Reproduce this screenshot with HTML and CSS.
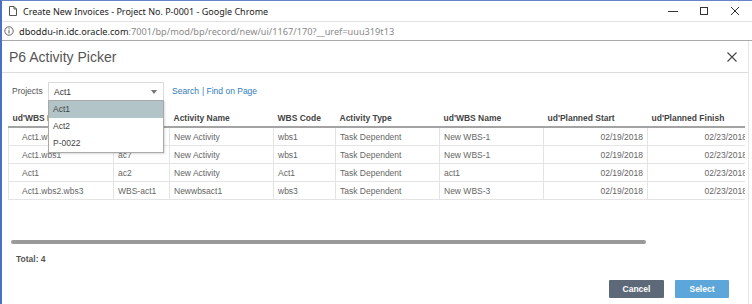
FILE: index.html
```html
<!DOCTYPE html>
<html lang="en">
<head>
    <meta charset="UTF-8">
    <title>Create New Invoices - Project No. P-0001</title>
    <link rel="stylesheet" href="styles.css">
</head>
<body>
    <div class="window">
        <div class="titlebar">
            <svg class="page-icon" width="8" height="10" viewBox="0 0 8 10">
                <path d="M0.5 0.5 H5 L7.5 3 V9.5 H0.5 Z M5 0.5 V3 H7.5" fill="none" stroke="#555" stroke-width="1"/>
            </svg>
            <span class="window-title">Create New Invoices - Project No. P-0001 - Google Chrome</span>
            <div class="window-controls">
                <svg width="10" height="10" viewBox="0 0 10 10"><path d="M0 5.5 H10" stroke="#333" stroke-width="1"/></svg>
                <svg width="10" height="10" viewBox="0 0 10 10"><rect x="1.5" y="1.5" width="7" height="7" fill="none" stroke="#333" stroke-width="1"/></svg>
                <svg width="10" height="10" viewBox="0 0 10 10"><path d="M1 1 L9 9 M9 1 L1 9" stroke="#333" stroke-width="1"/></svg>
            </div>
        </div>
        <div class="addressbar">
            <svg class="info-icon" width="10" height="10" viewBox="0 0 10 10">
                <circle cx="5" cy="5" r="4.2" fill="none" stroke="#555" stroke-width="0.9"/>
                <path d="M5 4.2 V7.4" stroke="#555" stroke-width="1"/>
                <circle cx="5" cy="2.8" r="0.6" fill="#555"/>
            </svg>
            <span class="url"><span class="url-host">dboddu-in.idc.oracle.com</span>:7001/bp/mod/bp/record/new/ui/1167/170?__uref=uuu319t13</span>
        </div>

        <div class="dialog">
            <div class="dialog-head">
                <h1 class="dialog-title">P6 Activity Picker</h1>
                <svg class="dialog-close" width="10" height="10" viewBox="0 0 10 10"><path d="M0.5 0.5 L9.5 9.5 M9.5 0.5 L0.5 9.5" stroke="#444" stroke-width="1.1"/></svg>
            </div>

            <div class="toolbar">
                <span class="label">Projects</span>
                <div class="picker">
                    <div class="select">
                        <span>Act1</span>
                        <span class="arrow"></span>
                    </div>
                    <ul class="options">
                        <li class="active">Act1</li>
                        <li>Act2</li>
                        <li>P-0022</li>
                    </ul>
                </div>
                <a class="link">Search</a>
                <a class="link sep">| Find on Page</a>
            </div>

            <div class="grid-wrap">
                <table class="grid">
                    <colgroup>
                        <col style="width:105px">
                        <col style="width:56px">
                        <col style="width:104px">
                        <col style="width:62px">
                        <col style="width:104px">
                        <col style="width:104px">
                        <col style="width:104px">
                        <col style="width:104px">
                    </colgroup>
                    <thead>
                        <tr>
                            <th>ud'WBS Name</th>
                            <th>Activity ID</th>
                            <th>Activity Name</th>
                            <th>WBS Code</th>
                            <th>Activity Type</th>
                            <th>ud'WBS Name</th>
                            <th>ud'Planned Start</th>
                            <th>ud'Planned Finish</th>
                        </tr>
                    </thead>
                    <tbody>
                        <tr>
                            <td class="first">Act1.wbs1</td>
                            <td>ac1</td>
                            <td>New Activity</td>
                            <td>wbs1</td>
                            <td>Task Dependent</td>
                            <td>New WBS-1</td>
                            <td class="num">02/19/2018</td>
                            <td class="num">02/23/2018</td>
                        </tr>
                        <tr>
                            <td class="first">Act1.wbs1</td>
                            <td>ac7</td>
                            <td>New Activity</td>
                            <td>wbs1</td>
                            <td>Task Dependent</td>
                            <td>New WBS-1</td>
                            <td class="num">02/19/2018</td>
                            <td class="num">02/23/2018</td>
                        </tr>
                        <tr>
                            <td class="first">Act1</td>
                            <td>ac2</td>
                            <td>New Activity</td>
                            <td>Act1</td>
                            <td>Task Dependent</td>
                            <td>act1</td>
                            <td class="num">02/19/2018</td>
                            <td class="num">02/23/2018</td>
                        </tr>
                        <tr>
                            <td class="first">Act1.wbs2.wbs3</td>
                            <td>WBS-act1</td>
                            <td>Newwbsact1</td>
                            <td>wbs3</td>
                            <td>Task Dependent</td>
                            <td>New WBS-3</td>
                            <td class="num">02/19/2018</td>
                            <td class="num">02/23/2018</td>
                        </tr>
                    </tbody>
                </table>
            </div>

            <div class="hscroll"><div class="thumb"></div></div>

            <div class="total">Total: 4</div>

            <div class="actions">
                <button class="btn btn-cancel">Cancel</button>
                <button class="btn btn-select">Select</button>
            </div>
        </div>
    </div>
</body>
</html>
```

FILE: styles.css
```css
body {
    margin: 0;
    width: 752px;
    height: 304px;
    overflow: hidden;
    background: #ffffff;
    font-family: "Liberation Sans", Arial, sans-serif;
}

.window {
    height: 303px;
    border-top: 1px solid #6784c8;
    border-left: 2px solid #4b6fc3;
    display: flex;
    flex-direction: column;
}

/* chrome title bar */
.titlebar {
    height: 20px;
    display: flex;
    align-items: center;
    padding-left: 7px;
}

.page-icon {
    margin-right: 6px;
}

.window-title {
    font-family: "Noto Sans", "Open Sans", sans-serif;
    font-size: 9px;
    color: #222;
}

.window-controls {
    margin-left: auto;
    display: flex;
    gap: 21px;
    padding-right: 12px;
}

.addressbar {
    height: 18px;
    border-top: 1px solid #e2e2e2;
    border-bottom: 1px solid #a9a9a9;
    display: flex;
    align-items: center;
    padding-left: 2px;
}

.info-icon {
    margin-right: 5px;
}

.url {
    font-family: "Noto Sans", "Open Sans", sans-serif;
    font-size: 9.2px;
    color: #8a8a8a;
}

.url-host {
    color: #222;
}

/* dialog */
.dialog {
    flex: 1;
    margin-right: 3px;
    border-right: 1px solid #e6e6e6;
    display: flex;
    flex-direction: column;
    position: relative;
}

.dialog-head {
    height: 31px;
    border-bottom: 1px solid #dcdcdc;
    display: flex;
    align-items: center;
    justify-content: space-between;
    padding: 0 11px 0 7px;
}

.dialog-title {
    margin: 0;
    font-size: 14px;
    font-weight: normal;
    color: #555;
}

.toolbar {
    display: flex;
    align-items: center;
    padding: 9px 0 0 10px;
    height: 18px;
    font-size: 8.5px;
}

.label {
    color: #555;
    width: 36px;
    align-self: flex-start;
    padding-top: 4px;
}

.picker {
    position: relative;
    width: 116px;
    margin-right: 8px;
}

.select {
    height: 17px;
    border: 1px solid #dadada;
    border-bottom: none;
    display: flex;
    align-items: center;
    padding: 0 6px 0 5px;
    color: #333;
}

.arrow {
    margin-left: auto;
    width: 0;
    height: 0;
    border-left: 3.5px solid transparent;
    border-right: 3.5px solid transparent;
    border-top: 4px solid #777;
}

.options {
    position: absolute;
    top: 18px;
    left: 0;
    width: 114px;
    margin: 0;
    padding: 0;
    list-style: none;
    background: #fff;
    border: 1px solid #a9a9a9;
    box-shadow: 1px 1px 2px rgba(0, 0, 0, 0.15);
    z-index: 2;
}

.options li {
    height: 17px;
    line-height: 17px;
    padding-left: 4px;
    color: #444;
}

.options li.active {
    background: #b3c4c9;
}

.link {
    color: #2f7dbc;
    margin-right: 3px;
}

/* grid */
.grid-wrap {
    margin: 9px 0 0 6px;
    width: 737px;
    overflow: hidden;
}

.grid {
    table-layout: fixed;
    border-collapse: collapse;
    width: 743px;
    font-size: 8.5px;
    color: #666;
}

.grid th {
    height: 17px;
    padding: 0 4px;
    text-align: left;
    font-weight: bold;
    color: #444;
    white-space: nowrap;
    overflow: hidden;
    border-bottom: 2px solid #a3a3a3;
}

.grid td {
    height: 17px;
    padding: 0 4px;
    border: 1px solid #e4e4e4;
    border-top: none;
    white-space: nowrap;
    overflow: hidden;
}

.grid td.first {
    padding-left: 13px;
}

.grid td.num {
    text-align: right;
}

.hscroll {
    margin: 40px 0 0 9px;
    width: 635px;
    height: 4px;
}

.thumb {
    height: 100%;
    background: #9a9a9a;
    border-radius: 2px;
}

.total {
    padding: 10px 0 0 14px;
    font-size: 8.5px;
    font-weight: bold;
    color: #555;
}

.actions {
    display: flex;
    justify-content: flex-end;
    gap: 11px;
    padding: 16px 19px 0 0;
}

.btn {
    width: 55px;
    height: 18px;
    border: none;
    border-radius: 1px;
    color: #fff;
    font-family: "Liberation Sans", Arial, sans-serif;
    font-size: 8.5px;
    font-weight: bold;
    padding: 0;
}

.btn-cancel {
    background: #5d6878;
}

.btn-select {
    width: 54px;
    background: #5ca6d9;
}
```
